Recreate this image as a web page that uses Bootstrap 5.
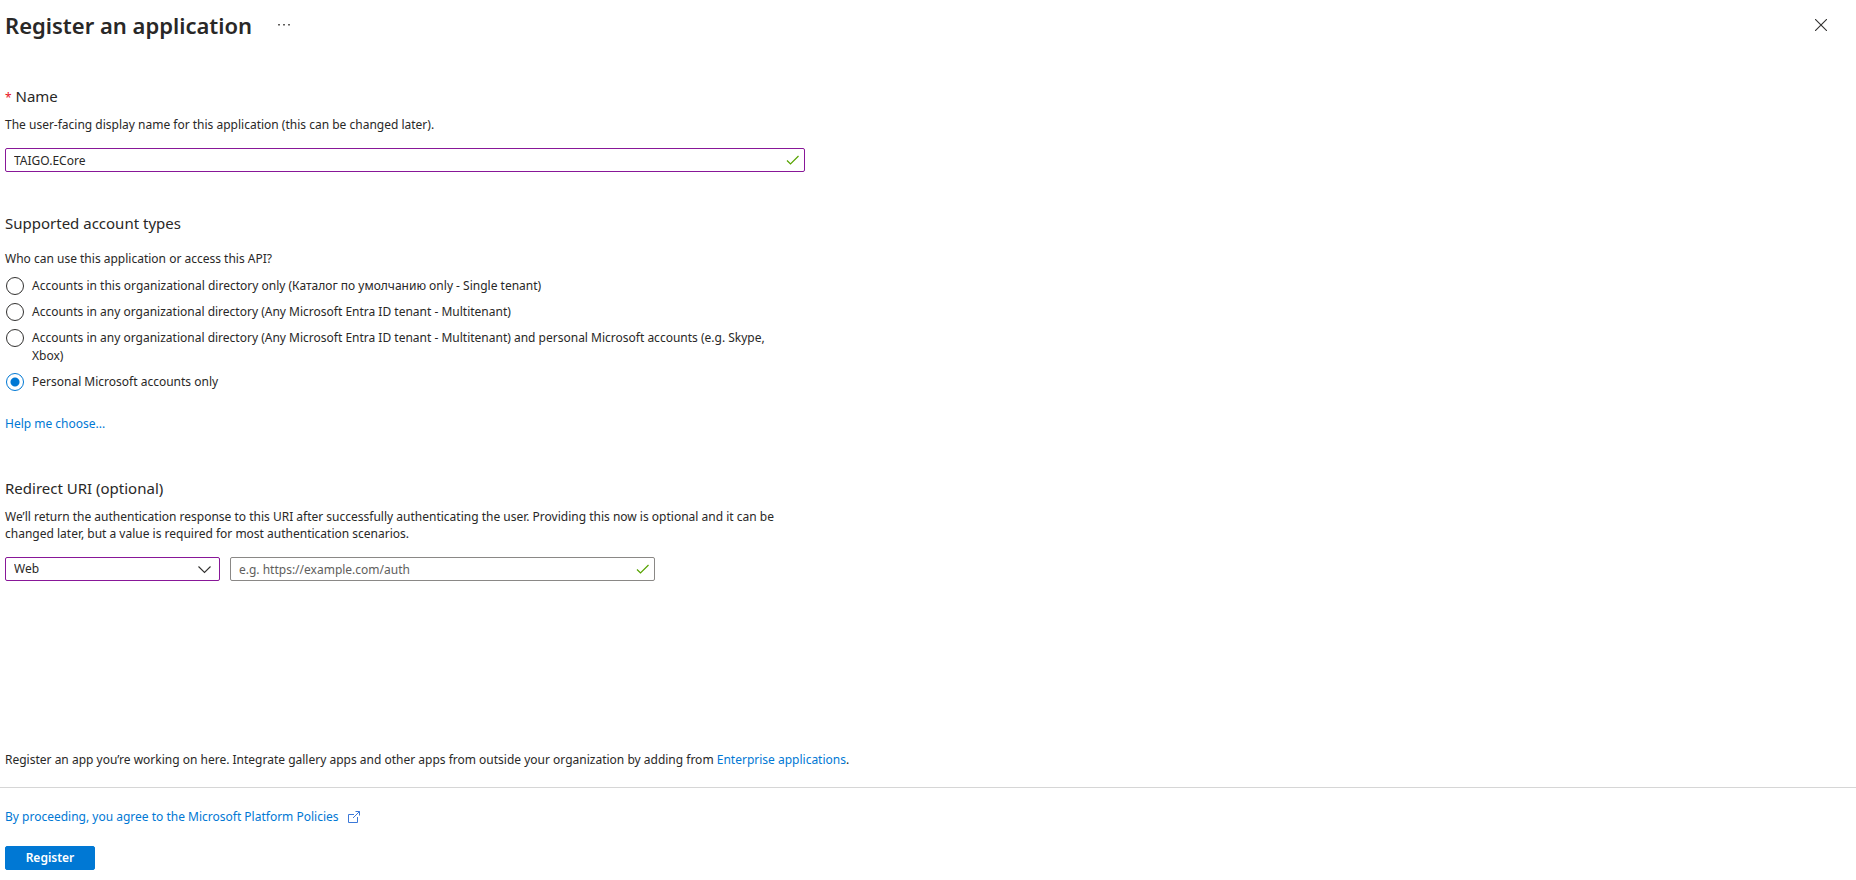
<!DOCTYPE html>
<html lang="en">
<head>
<meta charset="utf-8">
<meta name="viewport" content="width=device-width, initial-scale=1">
<title>Register an application</title>
<link href="https://cdn.jsdelivr.net/npm/bootstrap@5.3.0/dist/css/bootstrap.min.css" rel="stylesheet">
<style>
  body { font-family: "Segoe UI", "Noto Sans", sans-serif; font-size: 12px; line-height: 18px; color: #292827; background: #fff; }
  a { color: #0078d4; text-decoration: none; }
  a:hover { text-decoration: underline; }
  .gutter { padding-left: 5px; padding-right: 5px; }
  .page-header { padding-top: 9px; margin-bottom: 45px; }
  .page-title { font-size: 22px; line-height: 32px; font-weight: 600; }
  .section-title { font-size: 15px; line-height: 20px; font-weight: 400; margin-bottom: 10px; }
  .description { line-height: 17px; margin-bottom: 15px; }
  .icon-btn { line-height: 0; color: #323130; }
  .form-column { max-width: 800px; }
  .form-section { margin-bottom: 41px; }
  .required { color: #e81123; font-size: 12px; line-height: 1; }
  .form-control, .form-select { height: 24px; padding: 0 28px 0 8px; font-size: 12px; line-height: 22px; color: #292827; border: 1px solid #8a8886; border-radius: 2px; }
  .form-control.changed, .form-select.changed { border-color: #881798; }
  .form-control::placeholder { color: #605e5c; }
  .form-select { background-image: none; }
  .field-icon { position: absolute; right: 5px; top: 5px; pointer-events: none; }
  .redirect-row { gap: 10px; }
  .type-select { flex: 0 1 215px; }
  .uri-input { flex: 0 1 425px; }
  .account-title { margin-bottom: 17px; }
  .account-question { margin-bottom: 10px; line-height: 17px; }
  .account-types { gap: 8px; padding-right: 20px; }
  .account-section { margin-bottom: 45px; }
  .form-check { min-height: 18px; margin: 0; padding: 0 0 0 1px; display: flex; gap: 8px; }
  .form-check .form-check-input { flex: none; width: 18px; height: 18px; margin: 0; float: none; border: 1px solid #323130; }
  .form-check .form-check-input:checked { border-color: #0078d4; background-color: #fff; background-image: radial-gradient(circle, #0078d4 4px, transparent 5px); }
  .gallery-note { margin-bottom: 18px; }
  .page-footer { border-top: 1px solid #d6d6d6; padding-top: 20px; padding-bottom: 10px; }
  .policies { margin-bottom: 20px; }
  .btn-register { display: block; width: 90px; height: 24px; padding: 0; font-size: 12px; line-height: 22px; font-weight: 600; border-radius: 2px; --bs-btn-bg: #0078d4; --bs-btn-border-color: #0078d4; --bs-btn-color: #fff; }
</style>
</head>
<body class="d-flex flex-column min-vh-100">
<header class="page-header d-flex align-items-center gutter">
  <h1 class="page-title mb-0">Register an application</h1>
  <button type="button" class="btn p-0 border-0 icon-btn ms-4" aria-label="More options">
    <svg width="16" height="16" viewBox="0 0 16 16" fill="#605e5c"><path d="M2 7h2v1.500H2zM7 7h2v1.500H7zM12 7h2v1.500h-2z"/></svg>
  </button>
  <button type="button" class="btn p-0 border-0 icon-btn ms-auto me-4" aria-label="Close">
    <svg width="12" height="12" viewBox="0 0 12 12" fill="none" stroke="currentColor" stroke-width="1.100"><path d="M0 0l12 12M12 0L0 12"/></svg>
  </button>
</header>

<main class="gutter flex-grow-1">
  <form id="register-form" class="form-column">
    <section class="form-section">
      <h2 class="section-title"><label for="app-name"><span class="required">*</span> Name</label></h2>
      <p class="description" id="name-help">The user-facing display name for this application (this can be changed later).</p>
      <div class="position-relative">
        <input type="text" class="form-control changed" id="app-name" value="TAIGO.ECore" aria-describedby="name-help">
        <svg class="field-icon" width="14" height="14" viewBox="0 0 14 14" fill="none" stroke="#57a300" stroke-width="1.200"><path d="M1 7.500l3.500 3.500L12.500 3"/></svg>
      </div>
    </section>

    <fieldset class="account-section">
      <legend class="section-title account-title">Supported account types</legend>
      <p class="account-question">Who can use this application or access this API?</p>
      <div class="d-flex flex-column account-types mb-4">
        <div class="form-check">
          <input class="form-check-input" type="radio" name="account" id="single">
          <label class="form-check-label" for="single">Accounts in this organizational directory only (Каталог по умолчанию only - Single tenant)</label>
        </div>
        <div class="form-check">
          <input class="form-check-input" type="radio" name="account" id="multi">
          <label class="form-check-label" for="multi">Accounts in any organizational directory (Any Microsoft Entra ID tenant - Multitenant)</label>
        </div>
        <div class="form-check">
          <input class="form-check-input" type="radio" name="account" id="multi-personal">
          <label class="form-check-label" for="multi-personal">Accounts in any organizational directory (Any Microsoft Entra ID tenant - Multitenant) and personal Microsoft accounts (e.g. Skype, Xbox)</label>
        </div>
        <div class="form-check">
          <input class="form-check-input" type="radio" name="account" id="personal" checked>
          <label class="form-check-label" for="personal">Personal Microsoft accounts only</label>
        </div>
      </div>
      <a href="#help">Help me choose...</a>
    </fieldset>

    <section class="form-section">
      <h2 class="section-title">Redirect URI (optional)</h2>
      <p class="description">We’ll return the authentication response to this URI after successfully authenticating the user. Providing this now is optional and it can be changed later, but a value is required for most authentication scenarios.</p>
      <div class="d-flex redirect-row">
        <div class="position-relative type-select">
          <select class="form-select changed" aria-label="Platform"><option>Web</option><option>Public client/native</option></select>
          <svg class="field-icon" width="20" height="14" viewBox="0 0 20 14" fill="none" stroke="#323130" stroke-width="1.100"><path d="M3.500 4.500l6 6 6-6"/></svg>
        </div>
        <div class="position-relative uri-input">
          <input type="text" class="form-control" placeholder="e.g. https://example.com/auth" aria-label="Redirect URI">
          <svg class="field-icon" width="14" height="14" viewBox="0 0 14 14" fill="none" stroke="#57a300" stroke-width="1.200"><path d="M1 7.500l3.500 3.500L12.500 3"/></svg>
        </div>
      </div>
    </section>
  </form>
</main>

<p class="gutter gallery-note">Register an app you’re working on here. Integrate gallery apps and other apps from outside your organization by adding from <a href="#enterprise">Enterprise applications</a>.</p>
<footer class="page-footer gutter">
  <p class="policies"><a href="#policies" class="d-inline-flex align-items-center gap-2">By proceeding, you agree to the Microsoft Platform Policies
    <svg width="14" height="14" viewBox="0 0 14 14" fill="none" stroke="#3b78d8"><path d="M7 4.500H1.500v8h9V7M8.500 1.500h4v4M12.500 1.500L6 8"/></svg></a></p>
  <button type="submit" form="register-form" class="btn btn-primary btn-register">Register</button>
</footer>
<script src="https://cdn.jsdelivr.net/npm/bootstrap@5.3.0/dist/js/bootstrap.bundle.min.js"></script>
</body>
</html>
